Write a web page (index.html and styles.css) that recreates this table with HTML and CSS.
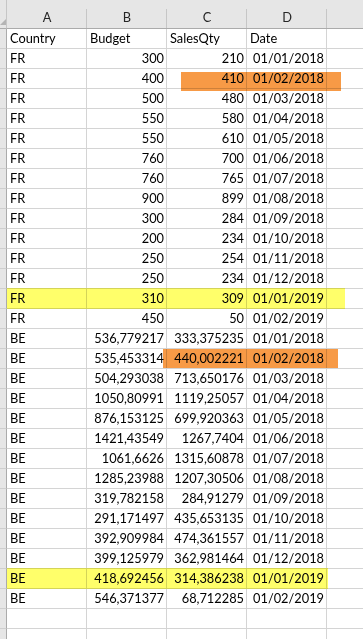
FILE: index.html
```html
<!DOCTYPE html>
<html>
<head>
<meta charset="utf-8">
<link rel="stylesheet" href="styles.css">
</head>
<body>
<div class="sheet">
  <div class="grid">
    <div class="hd corner"><span class="tri"></span></div>
    <div class="hd">A</div><div class="hd">B</div><div class="hd">C</div><div class="hd">D</div><div class="hd last"></div>

    <div class="rh"></div><div class="c">Country</div><div class="c">Budget</div><div class="c">SalesQty</div><div class="c">Date</div><div class="c last"></div>

    <div class="rh"></div><div class="c">FR</div><div class="c n">300</div><div class="c n">210</div><div class="c n">01/01/2018</div><div class="c last"></div>
    <div class="rh"></div><div class="c">FR</div><div class="c n">400</div><div class="c n">410</div><div class="c n">01/02/2018</div><div class="c last"></div>
    <div class="rh"></div><div class="c">FR</div><div class="c n">500</div><div class="c n">480</div><div class="c n">01/03/2018</div><div class="c last"></div>
    <div class="rh"></div><div class="c">FR</div><div class="c n">550</div><div class="c n">580</div><div class="c n">01/04/2018</div><div class="c last"></div>
    <div class="rh"></div><div class="c">FR</div><div class="c n">550</div><div class="c n">610</div><div class="c n">01/05/2018</div><div class="c last"></div>
    <div class="rh"></div><div class="c">FR</div><div class="c n">760</div><div class="c n">700</div><div class="c n">01/06/2018</div><div class="c last"></div>
    <div class="rh"></div><div class="c">FR</div><div class="c n">760</div><div class="c n">765</div><div class="c n">01/07/2018</div><div class="c last"></div>
    <div class="rh"></div><div class="c">FR</div><div class="c n">900</div><div class="c n">899</div><div class="c n">01/08/2018</div><div class="c last"></div>
    <div class="rh"></div><div class="c">FR</div><div class="c n">300</div><div class="c n">284</div><div class="c n">01/09/2018</div><div class="c last"></div>
    <div class="rh"></div><div class="c">FR</div><div class="c n">200</div><div class="c n">234</div><div class="c n">01/10/2018</div><div class="c last"></div>
    <div class="rh"></div><div class="c">FR</div><div class="c n">250</div><div class="c n">254</div><div class="c n">01/11/2018</div><div class="c last"></div>
    <div class="rh"></div><div class="c">FR</div><div class="c n">250</div><div class="c n">234</div><div class="c n">01/12/2018</div><div class="c last"></div>
    <div class="rh"></div><div class="c">FR</div><div class="c n">310</div><div class="c n">309</div><div class="c n">01/01/2019</div><div class="c last"></div>
    <div class="rh"></div><div class="c">FR</div><div class="c n">450</div><div class="c n">50</div><div class="c n">01/02/2019</div><div class="c last"></div>
    <div class="rh"></div><div class="c">BE</div><div class="c n">536,779217</div><div class="c n">333,375235</div><div class="c n">01/01/2018</div><div class="c last"></div>
    <div class="rh"></div><div class="c">BE</div><div class="c n">535,453314</div><div class="c n">440,002221</div><div class="c n">01/02/2018</div><div class="c last"></div>
    <div class="rh"></div><div class="c">BE</div><div class="c n">504,293038</div><div class="c n">713,650176</div><div class="c n">01/03/2018</div><div class="c last"></div>
    <div class="rh"></div><div class="c">BE</div><div class="c n">1050,80991</div><div class="c n">1119,25057</div><div class="c n">01/04/2018</div><div class="c last"></div>
    <div class="rh"></div><div class="c">BE</div><div class="c n">876,153125</div><div class="c n">699,920363</div><div class="c n">01/05/2018</div><div class="c last"></div>
    <div class="rh"></div><div class="c">BE</div><div class="c n">1421,43549</div><div class="c n">1267,7404</div><div class="c n">01/06/2018</div><div class="c last"></div>
    <div class="rh"></div><div class="c">BE</div><div class="c n">1061,6626</div><div class="c n">1315,60878</div><div class="c n">01/07/2018</div><div class="c last"></div>
    <div class="rh"></div><div class="c">BE</div><div class="c n">1285,23988</div><div class="c n">1207,30506</div><div class="c n">01/08/2018</div><div class="c last"></div>
    <div class="rh"></div><div class="c">BE</div><div class="c n">319,782158</div><div class="c n">284,91279</div><div class="c n">01/09/2018</div><div class="c last"></div>
    <div class="rh"></div><div class="c">BE</div><div class="c n">291,171497</div><div class="c n">435,653135</div><div class="c n">01/10/2018</div><div class="c last"></div>
    <div class="rh"></div><div class="c">BE</div><div class="c n">392,909984</div><div class="c n">474,361557</div><div class="c n">01/11/2018</div><div class="c last"></div>
    <div class="rh"></div><div class="c">BE</div><div class="c n">399,125979</div><div class="c n">362,981464</div><div class="c n">01/12/2018</div><div class="c last"></div>
    <div class="rh"></div><div class="c">BE</div><div class="c n">418,692456</div><div class="c n">314,386238</div><div class="c n">01/01/2019</div><div class="c last"></div>
    <div class="rh"></div><div class="c">BE</div><div class="c n">546,371377</div><div class="c n">68,712285</div><div class="c n">01/02/2019</div><div class="c last"></div>

    <div class="rh"></div><div class="c"></div><div class="c"></div><div class="c"></div><div class="c"></div><div class="c last"></div>
    <div class="rh"></div><div class="c"></div><div class="c"></div><div class="c"></div><div class="c"></div><div class="c last"></div>
  </div>
  <div class="mark orange o1"></div>
  <div class="mark yellow y1"></div>
  <div class="mark orange o2"></div>
  <div class="mark yellow y2"></div>
</div>
</body>
</html>
```

FILE: styles.css
```css
html, body {
  margin: 0;
  padding: 0;
  background: #ffffff;
}
body {
  width: 363px;
  height: 639px;
  overflow: hidden;
  font-family: Lato, "Liberation Sans", sans-serif;
  font-size: 12.8px;
  color: #000000;
}
.sheet {
  position: relative;
  width: 363px;
  height: 639px;
  overflow: hidden;
  background: #ffffff;
}
.grid {
  display: grid;
  grid-template-columns: 7px 80px 80px 80px 80px 1fr;
  grid-auto-rows: 20px;
  grid-template-rows: 29px;
}
.hd {
  position: relative;
  background: #e6e6e6;
  border-bottom: 1px solid #ababab;
  box-sizing: border-box;
  text-align: center;
  padding-top: 8px;
  line-height: 19px;
  color: #262626;
}
.hd::after {
  content: "";
  position: absolute;
  right: 0;
  top: 9px;
  bottom: 0;
  width: 1px;
  background: #c6c6c6;
}
.hd.last::after,
.hd.corner::after {
  display: none;
}
.corner {
  border-right: 1px solid #c6c6c6;
}
.tri {
  position: absolute;
  left: 0;
  bottom: 3px;
  width: 0;
  height: 0;
  border-left: 6px solid transparent;
  border-bottom: 6px solid #b4b4b4;
}
.rh {
  background: #e6e6e6;
  border-right: 1px solid #ababab;
  border-bottom: 1px solid #cfcfcf;
  box-sizing: border-box;
}
.c {
  box-sizing: border-box;
  border-right: 1px solid #d4d4d4;
  border-bottom: 1px solid #d4d4d4;
  line-height: 19px;
  padding: 0 2px 0 3px;
  white-space: nowrap;
  overflow: hidden;
}
.c.last {
  border-right: none;
}
.n {
  text-align: right;
}
.mark {
  position: absolute;
  mix-blend-mode: multiply;
}
.orange {
  background: #f79a46;
}
.yellow {
  background: #ffff6a;
}
.o1 { left: 181px; top: 72px; width: 160px; height: 19px; }
.y1 { left: 7px; top: 288px; width: 338px; height: 21px; }
.o2 { left: 163px; top: 349px; width: 175px; height: 19px; }
.y2 { left: 7px; top: 568px; width: 321px; height: 21px; }
```
